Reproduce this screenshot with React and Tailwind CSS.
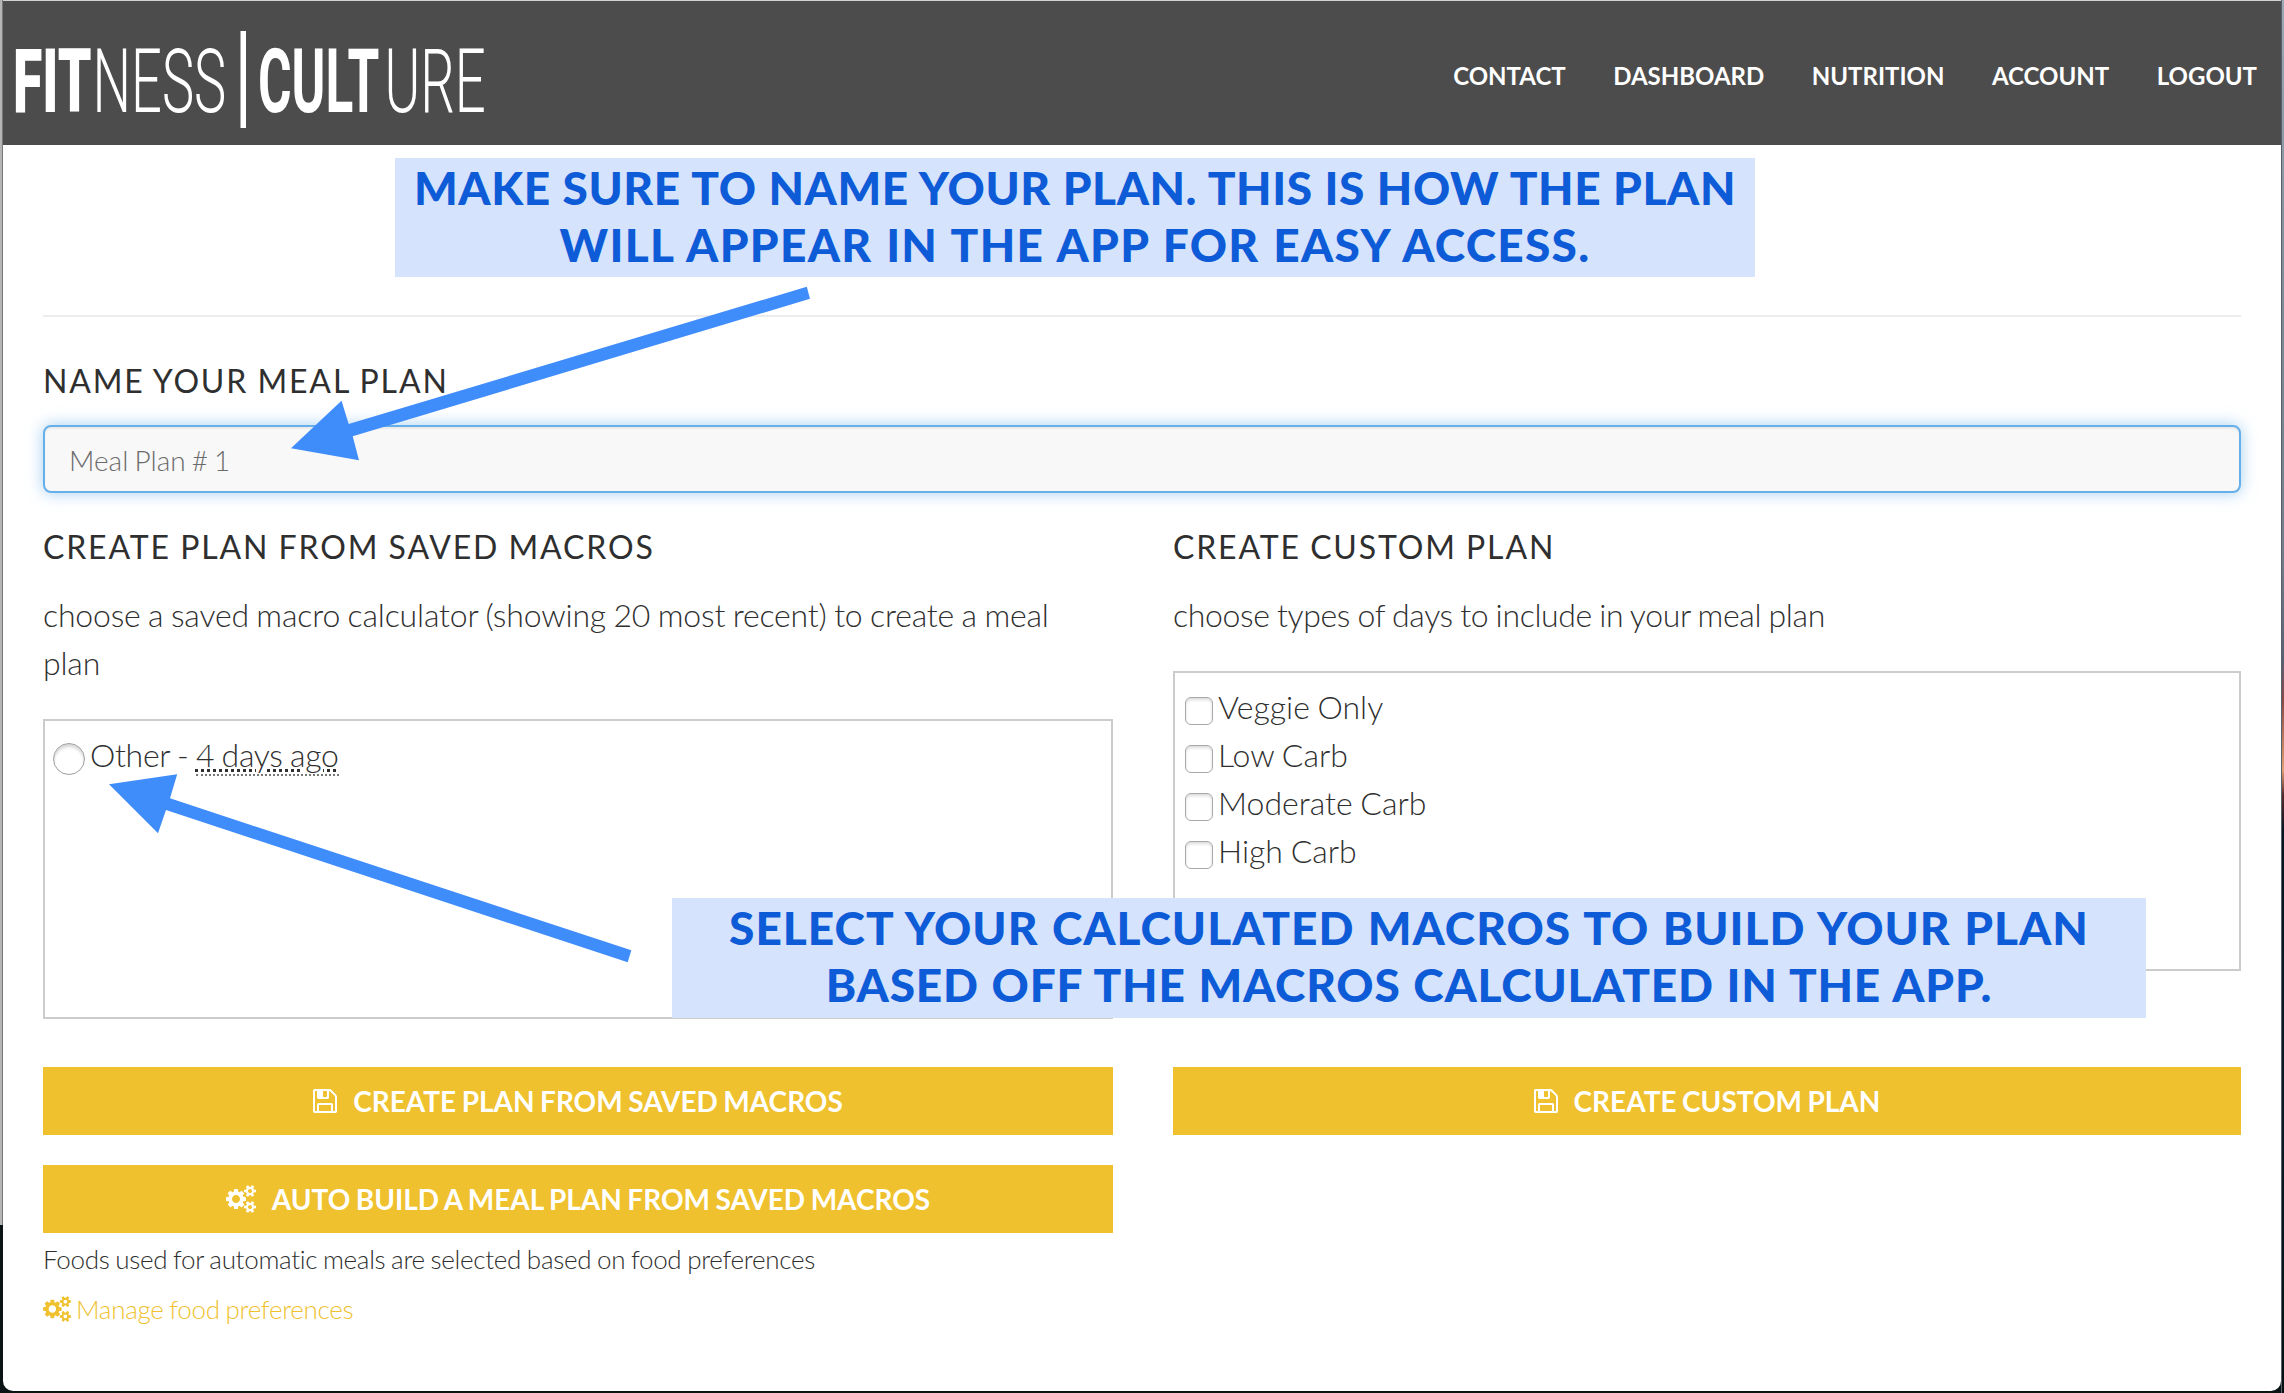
const NAV = ["CONTACT", "DASHBOARD", "NUTRITION", "ACCOUNT", "LOGOUT"];
const DAY_TYPES = ["Veggie Only", "Low Carb", "Moderate Carb", "High Carb"];

function FloppyIcon({ className }) {
  return (
    <svg viewBox="0 128 1536 1536" fill="currentColor" className={className}>
      <path d="M384 1536h768v-384h-768v384zm896 0h128v-896q0-14-10-38.500t-20-34.500l-281-281q-10-10-34-20t-39-10v416q0 40-28 68t-68 28h-576q-40 0-68-28t-28-68v-416h-128v1280h128v-416q0-40 28-68t68-28h832q40 0 68 28t28 68v416zm-384-928v-320q0-13-9.500-22.500t-22.500-9.500h-192q-13 0-22.500 9.500t-9.500 22.500v320q0 13 9.500 22.500t22.500 9.500h192q13 0 22.500-9.500t9.500-22.500zm640 32v928q0 40-28 68t-68 28h-1344q-40 0-68-28t-28-68v-1344q0-40 28-68t68-28h928q40 0 88 20t76 48l280 280q28 28 48 76t20 88z" />
    </svg>
  );
}

function CogsIcon({ className }) {
  return (
    <svg viewBox="-64 0 1920 1792" fill="currentColor" className={className}>
      <path d="M832 896q0-106-75-181t-181-75-181 75-75 181 75 181 181 75 181-75 75-181zm768 512q0-52-38-90t-90-38-90 38-38 90q0 53 37.500 90.500t90.500 37.500 90.500-37.500 37.500-90.500zm0-1024q0-52-38-90t-90-38-90 38-38 90q0 53 37.500 90.500t90.500 37.500 90.500-37.500 37.500-90.500zm-384 421v185q0 10-7 19.500t-16 10.500l-155 24q-11 35-32 76 34 48 90 115 7 11 7 20 0 12-7 19-23 30-82.500 89.500t-78.500 59.500q-11 0-21-7l-115-90q-37 19-77 31-11 108-23 155-7 24-30 24h-186q-11 0-20-7.500t-10-17.500l-23-153q-34-10-75-31l-118 89q-7 7-20 7-11 0-21-8-144-133-144-160 0-9 7-19 10-14 41-53t47-61q-23-44-35-82l-152-24q-10-1-17-9.500t-7-19.500v-185q0-10 7-19.500t16-10.500l155-24q11-35 32-76-34-48-90-115-7-11-7-20 0-12 7-20 22-30 82-89t79-59q11 0 21 7l115 90q34-18 77-32 11-108 23-154 7-24 30-24h186q11 0 20 7.500t10 17.500l23 153q34 10 75 31l118-89q8-7 20-7 11 0 21 8 144 133 144 160 0 8-7 19-12 16-42 54t-45 60q23 48 34 82l152 23q10 2 17 10.500t7 19.500zm640 533v140q0 16-149 31-12 27-30 52 51 113 51 138 0 4-4 7-122 71-124 71-8 0-46-47t-52-68q-20 2-30 2t-30-2q-14 21-52 68t-46 47q-2 0-124-71-4-3-4-7 0-25 51-138-18-25-30-52-149-15-149-31v-140q0-16 149-31 13-29 30-52-51-113-51-138 0-4 4-7 4-2 35-20t59-34 30-16q8 0 46 46.500t52 67.500q20-2 30-2t30 2q51-71 92-112l6-2q4 0 124 70 4 3 4 7 0 25-51 138 17 23 30 52 149 15 149 31zm0-1024v140q0 16-149 31-12 27-30 52 51 113 51 138 0 4-4 7-122 71-124 71-8 0-46-47t-52-68q-20 2-30 2t-30-2q-14 21-52 68t-46 47q-2 0-124-71-4-3-4-7 0-25 51-138-18-25-30-52-149-15-149-31v-140q0-16 149-31 13-29 30-52-51-113-51-138 0-4 4-7 4-2 35-20t59-34 30-16q8 0 46 46.500t52 67.500q20-2 30-2t30 2q51-71 92-112l6-2q4 0 124 70 4 3 4 7 0 25-51 138 17 23 30 52 149 15 149 31z" />
    </svg>
  );
}

function Logo() {
  return (
    <svg
      viewBox="0 0 520 144"
      className="h-36 w-[520px] shrink-0 fill-white font-['Roboto',sans-serif]"
      fontSize="88.500"
    >
      <text transform="translate(10 111) scale(0.605 1)" className="font-black">FIT</text>
      <text transform="translate(89.500 111) scale(0.613 1)" className="font-light">NESS</text>
      <rect x="237.500" y="30" width="5.500" height="97" />
      <text transform="translate(255 111) scale(0.58 1)" className="font-bold">CULT</text>
      <text transform="translate(381.500 111) scale(0.615 1)" className="font-light">URE</text>
    </svg>
  );
}

function Heading({ children, className = "" }) {
  return (
    <h3 className={`translate-y-px text-[32px] leading-9 tracking-[1.85px] [word-spacing:-0.7px] ${className}`}>{children}</h3>
  );
}

function Button({ icon, children, className = "" }) {
  return (
    <button
      className={`flex h-[68px] w-full items-center justify-center gap-4 bg-[#efc12e] pb-px text-[28px] font-bold tracking-normal text-white [word-spacing:-1.3px] ${className}`}
    >
      {icon}
      <span>{children}</span>
    </button>
  );
}

export default function App() {
  return (
    <div className="relative flex h-[1393px] w-[2284px] overflow-hidden bg-[#0a1414] font-['Lato',sans-serif] text-[#2f2f2f]">
      <div className="h-[1225px] w-[3px] shrink-0 border-r border-[#777] bg-[#b5b5b5]" />

      <main className="flex h-[1391px] min-w-0 flex-1 flex-col overflow-hidden rounded-b-[10px] border-t border-[#cfd3d1] bg-white">
        <header className="flex h-36 shrink-0 items-center justify-between bg-[#4c4c4c] pr-6">
          <Logo />
          <nav className="flex gap-[47.5px] pt-[5px] text-2xl font-bold text-white">
            {NAV.map((item) => (
              <a key={item}>{item}</a>
            ))}
          </nav>
        </header>

        <div className="flex flex-col pr-10 pl-10">
          <hr className="mt-[170px] border-t-2 border-[#ececec]" />
          <Heading className="mt-[45px]">NAME YOUR MEAL PLAN</Heading>
          <div className="mt-[27px] flex h-[68px] items-center rounded-lg border-2 border-[#66afe9] bg-[#f8f8f8] px-6 pt-0.5 text-[28px] font-light text-[#6b6b6b] shadow-[inset_0_2px_2px_rgba(0,0,0,0.06),0_0_16px_rgba(102,175,233,0.6)] [word-spacing:-1.5px]">
            Meal Plan # 1
          </div>

          <div className="mt-[35px] grid grid-cols-[1070px_1068px] gap-[60px] text-[32px] font-light tracking-[-0.3px] [word-spacing:-1px]">
            <section className="flex flex-col">
              <Heading className="font-normal">CREATE PLAN FROM SAVED MACROS</Heading>
              <p className="mt-[26px] pt-px pr-2 leading-[48px] tracking-[-0.18px]">
                choose a saved macro calculator (showing 20 most recent) to create a meal plan
              </p>
              <div className="mt-8 h-[300px] border-2 border-[#ccc] px-2 py-[9px]">
                <label className="flex h-12 items-center gap-[5px] leading-[48px]">
                  <span className="mt-2.5 size-8 rounded-full border border-[#a0a0a0] bg-white shadow-[inset_0_3px_3px_rgba(0,0,0,0.16)]" />
                  <span className="pt-px">
                    Other{" "}-{" "}
                    <abbr className="inline-block border-b-2 border-dotted border-[#777] leading-[38px] underline decoration-dotted decoration-[3px] underline-offset-[2px]">
                      4 days ago
                    </abbr>
                  </span>
                </label>
              </div>
              <Button className="mt-12" icon={<FloppyIcon className="size-6" />}>
                CREATE PLAN FROM SAVED MACROS
              </Button>
              <Button className="mt-[30px]" icon={<CogsIcon className="h-7 w-[30px]" />}>
                AUTO BUILD A MEAL PLAN FROM SAVED MACROS
              </Button>
              <p className="mt-1.5 text-[26px] leading-10">
                Foods used for automatic meals are selected based on food preferences
              </p>
              <a className="mt-2.5 flex items-center gap-[5px] text-[26px] leading-10 text-[#efc12e]">
                <CogsIcon className="h-[26px] w-7" />
                <span>Manage food preferences</span>
              </a>
            </section>

            <section className="flex flex-col">
              <Heading className="font-normal">CREATE CUSTOM PLAN</Heading>
              <p className="mt-[26px] pt-px leading-[48px] tracking-[-0.35px]">choose types of days to include in your meal plan</p>
              <div className="mt-8 h-[300px] border-2 border-[#ccc] px-2.5 py-[9px] tracking-normal">
                {DAY_TYPES.map((day) => (
                  <label key={day} className="flex h-12 items-center gap-[5px] leading-[48px]">
                    <span className="mt-2.5 size-7 rounded-md border border-[#a8a8a8] bg-white shadow-[inset_0_2px_3px_rgba(0,0,0,0.14)]" />
                    <span className="pt-0.5">{day}</span>
                  </label>
                ))}
              </div>
              <Button className="mt-24" icon={<FloppyIcon className="size-6" />}>
                CREATE CUSTOM PLAN
              </Button>
            </section>
          </div>
        </div>
      </main>

      <div className="h-full w-[3px] shrink-0 border-l border-[#55606c] bg-[linear-gradient(to_bottom,#9aa9b5_0,#7f8b99_300px,#777c8c_560px,#5a5f72_660px,#8a4a48_700px,#e0a070_770px,#5a2a2c_795px,#0b1420_830px,#0d1826_1100px,#081010_1393px)]" />

      <div className="absolute top-[158px] left-[395px] flex h-[119px] w-[1360px] flex-col items-center bg-[#d5e3fd] pt-px text-[46px] leading-[57px] font-black whitespace-nowrap text-[#0d5bd7]">
        <span className="tracking-[0.55px] [word-spacing:0.5px]">MAKE SURE TO NAME YOUR PLAN. THIS IS HOW THE PLAN</span>
        <span className="tracking-[1.3px] [word-spacing:1.5px]">WILL APPEAR IN THE APP FOR EASY ACCESS.</span>
      </div>
      <div className="absolute top-[897.5px] left-[672px] flex h-[120px] w-[1474px] flex-col items-center bg-[#d5e3fd] pt-px text-[46px] leading-[57px] font-black whitespace-nowrap text-[#0d5bd7]">
        <span className="tracking-[1px] [word-spacing:1.5px]">SELECT YOUR CALCULATED MACROS TO BUILD YOUR PLAN</span>
        <span className="tracking-[0.8px] [word-spacing:1px]">BASED OFF THE MACROS CALCULATED IN THE APP.</span>
      </div>

      <svg viewBox="0 0 2284 1393" className="pointer-events-none absolute inset-0 h-full w-full fill-[#3f8cfb]">
        <polygon points="806.800,286.700 810,298.700 352.700,436.300 359,460.300 291,448.300 341.500,400.700 348.700,424" />
        <polygon points="109,784.300 177.200,774.300 170,798.300 631.300,950.300 627.700,962.300 166,810 158,833.300" />
      </svg>
    </div>
  );
}
